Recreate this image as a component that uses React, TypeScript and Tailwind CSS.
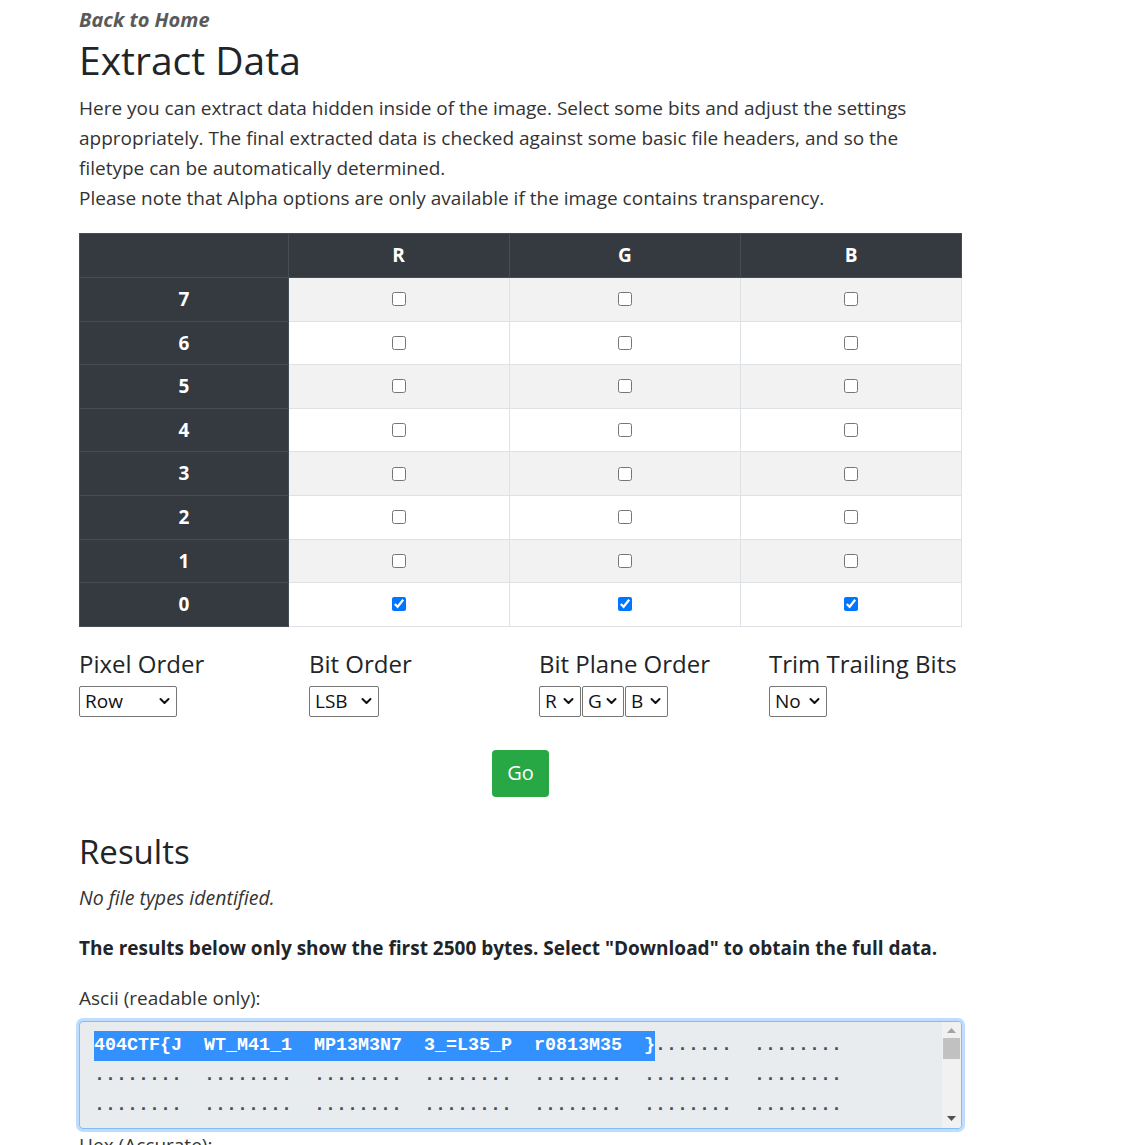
import React from "react";

const rows = [7, 6, 5, 4, 3, 2, 1, 0];

function Chevron() {
  return (
    <svg width="11" height="8" viewBox="0 0 11 8" className="shrink-0">
      <path d="M1.5 2 L5.5 6 L9.5 2" fill="none" stroke="#111" strokeWidth="2" strokeLinecap="round" strokeLinejoin="round" />
    </svg>
  );
}

function FakeSelect({ label, width }: { label: string; width: number }) {
  return (
    <div
      className="flex h-[31px] items-center justify-between rounded-[2px] border border-[#767676] bg-white pl-[5px] pr-[6px] text-[19px] text-[#111]"
      style={{ width }}
    >
      <span className="leading-none">{label}</span>
      <Chevron />
    </div>
  );
}

const dotGroup = "........";
const line2 = Array(7).fill(dotGroup).join("  ");

export default function App() {
  return (
    <div
      className="min-h-[1145px] bg-white pl-[79px] text-[#212529]"
      style={{ fontFamily: '"Open Sans", "Noto Sans", sans-serif' }}
    >
      <div className="w-[883px]">
        <div className="pt-[8px] text-[20px] font-bold italic leading-[24px] text-[#5a5a5a]">Back to Home</div>
        <h1 className="mt-[6px] text-[39px] font-medium leading-[44px] text-[#212529]">Extract Data</h1>
        <p className="mt-[11px] whitespace-nowrap text-[19px] leading-[30px] text-[#333]">
          Here you can extract data hidden inside of the image. Select some bits and adjust the settings
          <br />
          appropriately. The final extracted data is checked against some basic file headers, and so the
          <br />
          filetype can be automatically determined.
          <br />
          Please note that Alpha options are only available if the image contains transparency.
        </p>

        <table className="mt-[20px] w-[883px] border-collapse text-[19px]">
          <thead>
            <tr className="h-[44px] bg-[#343a40] text-white">
              <th className="w-[209px] border border-[#454d55]"></th>
              <th className="w-[221px] border border-[#454d55] font-bold">R</th>
              <th className="w-[232px] border border-[#454d55] font-bold">G</th>
              <th className="w-[221px] border border-[#454d55] font-bold">B</th>
            </tr>
          </thead>
          <tbody>
            {rows.map((r, i) => (
              <tr key={r} className={`h-[43.6px] ${i % 2 === 0 ? "bg-[#f2f2f2]" : "bg-white"}`}>
                <th className="border border-[#454d55] bg-[#343a40] font-bold text-white">{r}</th>
                {["R", "G", "B"].map((c) => (
                  <td key={c} className="border border-[#dee2e6] text-center align-middle">
                    <input
                      type="checkbox"
                      defaultChecked={r === 0}
                      className="m-0 mx-auto block h-[14px] w-[14px]"
                    />
                  </td>
                ))}
              </tr>
            ))}
          </tbody>
        </table>

        <div className="mt-[22px] grid grid-cols-[230px_230px_230px_193px]">
          <div>
            <div className="text-[24px] leading-[29px]">Pixel Order</div>
            <div className="mt-[8px]">
              <FakeSelect label="Row" width={98} />
            </div>
          </div>
          <div>
            <div className="text-[24px] leading-[29px]">Bit Order</div>
            <div className="mt-[8px]">
              <FakeSelect label="LSB" width={70} />
            </div>
          </div>
          <div>
            <div className="text-[24px] leading-[29px]">Bit Plane Order</div>
            <div className="mt-[8px] flex gap-[1px]">
              <FakeSelect label="R" width={42} />
              <FakeSelect label="G" width={42} />
              <FakeSelect label="B" width={43} />
            </div>
          </div>
          <div>
            <div className="whitespace-nowrap text-[24px] leading-[29px]">Trim Trailing Bits</div>
            <div className="mt-[8px]">
              <FakeSelect label="No" width={58} />
            </div>
          </div>
        </div>

        <div className="mt-[33px] flex justify-center">
          <button className="h-[47px] w-[57px] rounded-[4px] bg-[#28a745] text-[20px] text-white">Go</button>
        </div>

        <h2 className="mt-[36px] text-[33px] font-medium leading-[38px]">Results</h2>
        <p className="mt-[12px] text-[19.5px] italic leading-[30px] text-[#333]">No file types identified.</p>
        <p className="mt-[20px] whitespace-nowrap text-[19px] font-bold leading-[30px]">
          The results below only show the first 2500 bytes. Select "Download" to obtain the full data.
        </p>
        <p className="mt-[20px] text-[19px] leading-[30px] text-[#333]">Ascii (readable only):</p>

        <div className="mt-[8px] flex h-[108px] w-[883px] overflow-hidden rounded-[4px] border border-[#80bdff] bg-[#e9ecef] shadow-[0_0_0_3px_rgba(0,123,255,0.25)]">
          <div
            className="flex-1 overflow-hidden whitespace-pre pl-[14px] pt-[9px] text-[18.33px] font-bold leading-[30px] text-[#495057]"
            style={{ fontFamily: '"Liberation Mono", "DejaVu Sans Mono", monospace' }}
          >
            <div className="h-[30px]">
              <span className="inline-block h-[30px] bg-[#3390ff] align-top leading-[30px] text-white">
                {"404CTF{J  WT_M41_1  MP13M3N7  3_=L35_P  r0813M35  }"}
              </span>
              <span className="inline-block align-top leading-[30px]">{".......  ........"}</span>
            </div>
            <div>{line2}</div>
            <div>{line2}</div>
            <div>{line2}</div>
          </div>
          <div className="flex w-[19px] flex-col items-center bg-[#f1f1f1] pt-[6px]">
            <svg width="9" height="5" viewBox="0 0 9 5">
              <path d="M0 5 L4.5 0 L9 5 Z" fill="#a3a3a3" />
            </svg>
            <div className="mt-[5px] h-[21px] w-[17px] bg-[#c1c1c1]" />
            <div className="flex-1" />
            <svg width="9" height="5" viewBox="0 0 9 5" className="mb-[7px]">
              <path d="M0 0 L9 0 L4.5 5 Z" fill="#505050" />
            </svg>
          </div>
        </div>
        <p className="mt-[1px] text-[19px] leading-[30px] text-[#333]">Hex (Accurate):</p>
      </div>
    </div>
  );
}
